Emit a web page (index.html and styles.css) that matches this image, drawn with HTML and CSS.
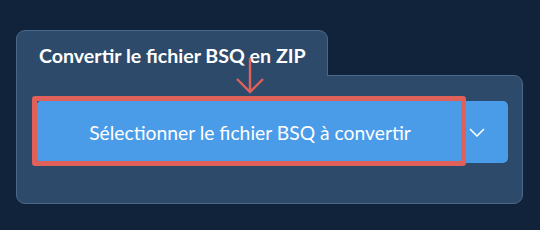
FILE: index.html
```html
<!DOCTYPE html>
<html lang="fr">
<head>
  <meta charset="UTF-8">
  <meta name="viewport" content="width=device-width, initial-scale=1.0">
  <title>Convertir BSQ</title>
  <link rel="stylesheet" href="styles.css">
</head>
<body>

<main class="wrap">
  <div class="tab">Convertir le fichier BSQ en ZIP</div>

  <div class="panel">
    <div class="btn-group">
      <button class="btn-main">Sélectionner le fichier BSQ à convertir</button>
      <button class="btn-drop" aria-label="Plus d'options">
        <svg width="16" height="9" viewBox="0 0 16 9">
          <polyline points="1,1 8,8 15,1" fill="none" stroke="#fff" stroke-width="1.6"/>
        </svg>
      </button>
    </div>

    <!-- annotation -->
    <div class="mark-box"></div>
    <svg class="mark-arrow" width="30" height="38" viewBox="0 0 30 38">
      <path d="M15 1 V35 M2 22 L15 35 L28 22" fill="none" stroke="#e0605a" stroke-width="2.4"/>
    </svg>
  </div>
</main>

</body>
</html>
```

FILE: styles.css
```css
body {
  margin: 0;
  background: #10233a;
  font-family: Lato, 'Noto Sans', sans-serif;
  color: #fff;
}
.wrap { padding: 30px 0 0 16px; }

.tab {
  position: relative; z-index: 1;
  width: 312px; height: 46px;
  padding-left: 22px;
  box-sizing: border-box;
  background: #2d4a6b;
  border: 1px solid #4c6888; border-bottom: 1px solid #2d4a6b;
  border-radius: 9px 9px 0 0;
  margin-bottom: -1px;
  font-size: 19.6px; font-weight: bold;
  line-height: 50px;
}

.panel {
  position: relative;
  width: 507px; height: 129px;
  box-sizing: border-box;
  padding: 25px 14px 0 20px;
  background: #2d4a6b;
  border: 1px solid #4c6888;
  border-radius: 0 9px 9px 9px;
}

.btn-group { display: flex; height: 62px; }
button {
  border: none; background: #4a9be8; color: #fff;
  font-family: inherit; cursor: pointer;
}
.btn-main {
  width: 426px;
  font-size: 19.3px;
  border-radius: 4px 0 0 4px;
}
.btn-drop {
  flex: 1;
  border-radius: 0 5px 5px 0;
  display: flex; align-items: center;
  padding: 0 0 0 6px;
}
.btn-drop svg { display: block; }

.mark-box {
  position: absolute; left: 15px; top: 20px;
  width: 434px; height: 70px;
  box-sizing: border-box;
  border: 5px solid #e0605a;
  border-radius: 3px;
}
.mark-arrow { position: absolute; z-index: 2; left: 218px; top: -19px; }
```
